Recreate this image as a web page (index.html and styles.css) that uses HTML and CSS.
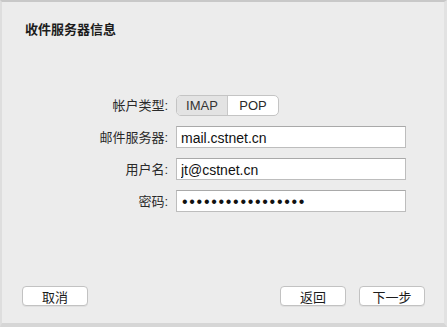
FILE: index.html
```html
<!DOCTYPE html>
<html lang="zh-CN">
<head>
  <meta charset="UTF-8">
  <title>收件服务器信息</title>
  <link rel="stylesheet" href="styles.css">
</head>
<body>
  <div class="sheet">
    <h1 class="title">收件服务器信息</h1>

    <form class="server-form">
      <label class="label">帐户类型:</label>
      <div class="segmented">
        <span class="segment active">IMAP</span>
        <span class="segment">POP</span>
      </div>

      <label class="label" for="server">邮件服务器:</label>
      <input class="field" id="server" type="text" value="mail.cstnet.cn">

      <label class="label" for="user">用户名:</label>
      <input class="field" id="user" type="text" value="jt@cstnet.cn">

      <label class="label" for="pass">密码:</label>
      <input class="field dots" id="pass" type="text" value="•••••••••••••••••">
    </form>

    <div class="actions">
      <button class="btn" type="button">取消</button>
      <div class="actions-right">
        <button class="btn" type="button">返回</button>
        <button class="btn" type="button">下一步</button>
      </div>
    </div>
  </div>
</body>
</html>
```

FILE: styles.css
```css
html, body {
  margin: 0;
  padding: 0;
  background: #d9d9d9;
}

body {
  font-family: "Liberation Sans", "Noto Sans CJK SC", sans-serif;
  font-size: 13px;
  color: #1c1c1c;
}

.sheet {
  box-sizing: border-box;
  width: 447px;
  height: 327px;
  background: #ececec;
  border-top: 2px solid #c8c8c8;
  border-left: 2px solid #dedede;
  border-right: 3px solid #e2e2e2;
  border-bottom: 4px solid #d6d6d6;
  display: flex;
  flex-direction: column;
}

.title {
  margin: 0;
  padding: 20px 0 0 23px;
  font-size: 13px;
  font-weight: bold;
  line-height: 16px;
}

/* form rows */
.server-form {
  display: grid;
  grid-template-columns: 166px 230px;
  column-gap: 8px;
  row-gap: 10px;
  margin-top: 57px;
  align-items: center;
}

.label {
  text-align: right;
  line-height: 21px;
  color: #2a2a2a;
}

.segmented {
  display: flex;
  width: 103px;
  height: 21px;
  box-sizing: border-box;
  border: 1px solid #c4c4c4;
  border-radius: 5px;
  background: #fff;
  overflow: hidden;
}

.segment {
  flex: 1;
  text-align: center;
  line-height: 19px;
  font-size: 13px;
  color: #2a2a2a;
}

.segment.active {
  background: #e3e3e3;
  border-right: 1px solid #c8c8c8;
  color: #333;
}

.field {
  box-sizing: border-box;
  width: 230px;
  height: 22px;
  margin: 0;
  padding: 1px 4px 0;
  border: 1px solid #bdbdbd;
  border-top-color: #a9a9a9;
  background: #fff;
  font-family: "Liberation Sans", "Noto Sans CJK SC", sans-serif;
  font-size: 14px;
  color: #111;
  outline: none;
}

.field.dots {
  font-size: 16px;
  letter-spacing: 1.7px;
  padding-left: 5px;
}

/* bottom buttons */
.actions {
  margin-top: auto;
  padding: 0 19px 17px 20px;
  display: flex;
  justify-content: space-between;
}

.actions-right {
  display: flex;
  gap: 13px;
}

.btn {
  width: 66px;
  height: 20px;
  padding: 0;
  border: 1px solid #c2c2c2;
  border-radius: 4px;
  background: #fff;
  font-family: "Liberation Sans", "Noto Sans CJK SC", sans-serif;
  font-size: 13px;
  color: #1c1c1c;
  box-shadow: 0 1px 0 rgba(0, 0, 0, 0.05);
}
```
